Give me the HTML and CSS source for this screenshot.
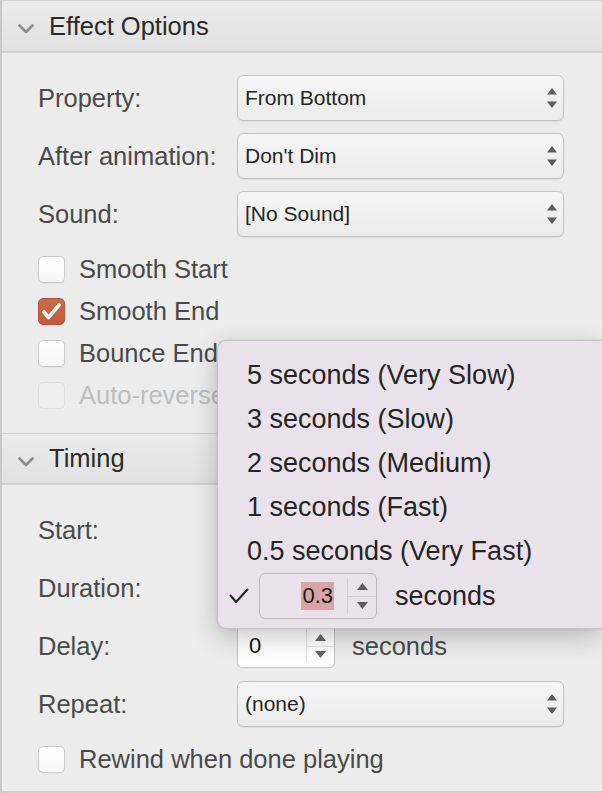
FILE: index.html
```html
<!DOCTYPE html>
<html>
<head>
<meta charset="utf-8">
<link rel="stylesheet" href="styles.css">
</head>
<body>
<div class="panel">
  <section class="section">
    <div class="sec-head">
      <svg class="chev" width="16" height="10" viewBox="0 0 16 10"><path d="M1.5 1.5 L8 8 L14.5 1.5" fill="none" stroke="#8c8c8c" stroke-width="2.6" stroke-linecap="round" stroke-linejoin="round"/></svg>
      <span>Effect Options</span>
    </div>
    <div class="sec-body first">
      <div class="rows">
        <div class="row"><span class="label">Property:</span>
          <div class="select"><span>From Bottom</span><svg class="updown" width="10" height="20" viewBox="0 0 10 20"><path d="M5 0 L10 6.5 L0 6.5 Z M0 13.5 L10 13.5 L5 20 Z" fill="#5c5c5c"/></svg></div>
        </div>
        <div class="row"><span class="label">After animation:</span>
          <div class="select"><span>Don't Dim</span><svg class="updown" width="10" height="20" viewBox="0 0 10 20"><path d="M5 0 L10 6.5 L0 6.5 Z M0 13.5 L10 13.5 L5 20 Z" fill="#5c5c5c"/></svg></div>
        </div>
        <div class="row"><span class="label">Sound:</span>
          <div class="select"><span>[No Sound]</span><svg class="updown" width="10" height="20" viewBox="0 0 10 20"><path d="M5 0 L10 6.5 L0 6.5 Z M0 13.5 L10 13.5 L5 20 Z" fill="#5c5c5c"/></svg></div>
        </div>
      </div>
      <div class="checks">
        <div class="check"><span class="box"></span><span>Smooth Start</span></div>
        <div class="check"><span class="box on"><svg width="27" height="27" viewBox="0 0 27 27"><path d="M6 14 L10.5 19.5 L21 7" fill="none" stroke="#fff" stroke-width="3.6" stroke-linecap="round" stroke-linejoin="round"/></svg></span><span>Smooth End</span></div>
        <div class="check"><span class="box"></span><span>Bounce End</span></div>
        <div class="check disabled"><span class="box"></span><span>Auto-reverse</span></div>
      </div>
    </div>
  </section>
  <section class="section second">
    <div class="sec-head">
      <svg class="chev" width="16" height="10" viewBox="0 0 16 10"><path d="M1.5 1.5 L8 8 L14.5 1.5" fill="none" stroke="#8c8c8c" stroke-width="2.6" stroke-linecap="round" stroke-linejoin="round"/></svg>
      <span>Timing</span>
    </div>
    <div class="sec-body last">
      <div class="rows">
        <div class="row"><span class="label">Start:</span>
          <div class="select"></div>
        </div>
        <div class="row"><span class="label">Duration:</span>
          <div class="stepper"><span class="field"></span><span class="arrows"><span class="half top"></span><span class="half"></span></span></div>
        </div>
        <div class="row"><span class="label">Delay:</span>
          <div class="stepper"><span class="field">0</span><span class="arrows"><span class="half top"><svg width="11" height="7" viewBox="0 0 11 7"><path d="M5.5 0 L11 7 L0 7 Z" fill="#666"/></svg></span><span class="half"><svg width="11" height="7" viewBox="0 0 11 7"><path d="M0 0 L11 0 L5.5 7 Z" fill="#666"/></svg></span></span></div>
          <span class="unit">seconds</span>
        </div>
        <div class="row"><span class="label">Repeat:</span>
          <div class="select"><span>(none)</span><svg class="updown" width="10" height="20" viewBox="0 0 10 20"><path d="M5 0 L10 6.5 L0 6.5 Z M0 13.5 L10 13.5 L5 20 Z" fill="#5c5c5c"/></svg></div>
        </div>
      </div>
      <div class="checks">
        <div class="check"><span class="box"></span><span>Rewind when done playing</span></div>
      </div>
    </div>
  </section>

  <div class="popup">
    <div class="item">5 seconds (Very Slow)</div>
    <div class="item">3 seconds (Slow)</div>
    <div class="item">2 seconds (Medium)</div>
    <div class="item">1 seconds (Fast)</div>
    <div class="item">0.5 seconds (Very Fast)</div>
    <div class="item custom">
      <svg class="tick" width="20" height="16" viewBox="0 0 20 16"><path d="M1.5 7.5 L7 14 L18.5 1.5" fill="none" stroke="#222" stroke-width="2" stroke-linecap="round" stroke-linejoin="round"/></svg>
      <div class="pstep"><span class="pfield"><span class="hl">0.3</span></span><span class="parrows"><span class="phalf top"><svg width="11" height="7" viewBox="0 0 11 7"><path d="M5.5 0 L11 7 L0 7 Z" fill="#5e5a5f"/></svg></span><span class="phalf"><svg width="11" height="7" viewBox="0 0 11 7"><path d="M0 0 L11 0 L5.5 7 Z" fill="#5e5a5f"/></svg></span></span></div>
      <span class="punit">seconds</span>
    </div>
  </div>
</div>
</body>
</html>
```

FILE: styles.css
```css
* { box-sizing: border-box; }
html, body { margin: 0; padding: 0; }
body {
  width: 602px;
  height: 793px;
  overflow: hidden;
  background: #ececec;
  font-family: "Liberation Sans", Arial, sans-serif;
}
.panel {
  position: relative;
  height: 793px;
  border-left: 2px solid #c9c9c9;
  border-top: 1px solid #d4d4d4;
}
.sec-head {
  height: 52px;
  display: flex;
  align-items: center;
  gap: 15px;
  padding-left: 16px;
  background: linear-gradient(#ebebeb, #e2e2e2);
  border-bottom: 2px solid #d1d1d1;
  font-size: 25.5px;
  color: #2a2a2a;
}
.chev { margin-top: 6px; flex: none; }
.second { border-top: 1px solid #d0d0d0; }
.second .sec-head { height: 51px; }
.sec-body { padding-left: 36px; }
.sec-body.first { padding-top: 22px; padding-bottom: 24px; }
.sec-body.last { padding-top: 22px; padding-bottom: 18px; border-bottom: 2px solid #d0d0d0; }
.rows { display: flex; flex-direction: column; gap: 12px; }
.row {
  display: flex;
  align-items: center;
  height: 46px;
  font-size: 25.5px;
  color: #4a4a4a;
}
.label { width: 199px; flex: none; }
.select {
  width: 327px;
  height: 46px;
  border: 1px solid #c3c3c3;
  border-radius: 6px;
  background: linear-gradient(#f6f6f6, #ebebeb);
  box-shadow: 0 1px 1px rgba(0,0,0,0.05);
  display: flex;
  align-items: center;
  justify-content: space-between;
  padding: 0 6px 0 7px;
  font-size: 21px;
  color: #262626;
}
.stepper {
  width: 98px;
  height: 44px;
  display: flex;
  border: 1px solid #c3c3c3;
  border-radius: 5px;
  background: #fff;
  flex: none;
}
.stepper .field {
  flex: 1;
  display: flex;
  align-items: center;
  padding-left: 11px;
  font-size: 22px;
  color: #111;
}
.stepper .arrows {
  width: 28px;
  margin: 4px 0;
  border-left: 1px solid #e2e2e2;
  display: flex;
  flex-direction: column;
}
.half {
  flex: 1;
  display: flex;
  align-items: center;
  justify-content: center;
}
.half.top { border-bottom: 1px solid #e2e2e2; }
.unit { margin-left: 17px; }
.checks { margin-top: 18px; display: flex; flex-direction: column; gap: 14px; }
.check {
  display: flex;
  align-items: center;
  gap: 14px;
  height: 28px;
  font-size: 25.5px;
  color: #4a4a4a;
}
.box {
  width: 27px;
  height: 27px;
  flex: none;
  border-radius: 5px;
  border: 1px solid #cacaca;
  background: linear-gradient(#ffffff, #f6f6f6);
  box-shadow: 0 1px 1px rgba(0,0,0,0.04);
}
.box.on {
  background: linear-gradient(#cd6a47, #c05c3b);
  border-color: #b65638;
}
.box.on svg { display: block; margin: -1px; }
.check.disabled { color: #bebebe; }
.check.disabled .box { border-color: #e0e0e0; background: #eeeeee; box-shadow: none; }

.popup {
  position: absolute;
  left: 215px;
  top: 339px;
  right: 0;
  height: 289px;
  padding-top: 12px;
  background: #e9e2ea;
  border: 1px solid #c7c1c8;
  border-right: none;
  border-radius: 9px 0 0 9px;
  box-shadow: 0 8px 26px rgba(0,0,0,0.22), 0 0 2px rgba(0,0,0,0.15);
  font-size: 27px;
  color: #252525;
}
.item {
  height: 44px;
  display: flex;
  align-items: center;
  padding-left: 29px;
}
.item.custom { height: 46px; padding-left: 11px; }
.tick { flex: none; margin-right: 10px; }
.pstep {
  width: 118px;
  height: 46px;
  display: flex;
  border: 1px solid #bdb7be;
  border-radius: 6px;
  flex: none;
}
.pfield {
  flex: 1;
  display: flex;
  align-items: center;
  justify-content: flex-end;
  padding-right: 13px;
}
.hl {
  background: #d7a5a8;
  height: 28px;
  line-height: 28px;
  padding: 0 1px;
  font-size: 22px;
  color: #1a1a1a;
}
.parrows {
  width: 29px;
  margin: 4px 0;
  border-left: 1px solid #d2ccd3;
  display: flex;
  flex-direction: column;
}
.phalf { flex: 1; display: flex; align-items: center; justify-content: center; }
.phalf.top { border-bottom: 1px solid #d2ccd3; }
.punit { margin-left: 18px; }
```
